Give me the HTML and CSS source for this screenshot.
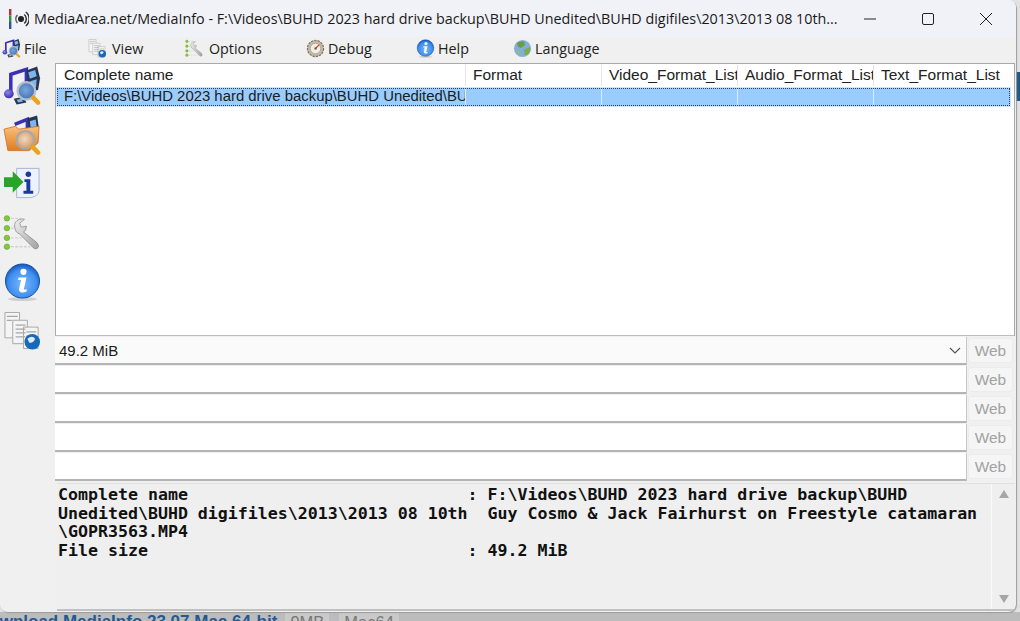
FILE: index.html
```html
<!DOCTYPE html>
<html lang="en">
<head>
<meta charset="utf-8">
<title>MediaInfo</title>
<link rel="stylesheet" href="styles.css">
</head>
<body>
<svg class="defs" width="0" height="0" aria-hidden="true">
  <defs>
    <radialGradient id="ball" cx="50%" cy="58%" r="58%"><stop offset="0" stop-color="#7ab8fa"/><stop offset=".7" stop-color="#3f8ff0"/><stop offset="1" stop-color="#1555b8"/></radialGradient>
    <radialGradient id="head" cx="40%" cy="35%" r="70%"><stop offset="0" stop-color="#8f88e8"/><stop offset="1" stop-color="#3128a8"/></radialGradient>
    <radialGradient id="glass" cx="45%" cy="45%" r="60%"><stop offset="0" stop-color="#7aa6dc"/><stop offset="1" stop-color="#3f6fb0"/></radialGradient>
    <radialGradient id="glass2" cx="45%" cy="45%" r="60%"><stop offset="0" stop-color="#f2d8bc"/><stop offset="1" stop-color="#cf9a6c"/></radialGradient>
    <linearGradient id="fold" x1="0" y1="0" x2="0" y2="1"><stop offset="0" stop-color="#fac07c"/><stop offset="1" stop-color="#e07c20"/></linearGradient>
    <linearGradient id="steel" x1="0" y1="0" x2="1" y2="1"><stop offset="0" stop-color="#f0f0f0"/><stop offset="1" stop-color="#a0a0a0"/></linearGradient>
    <symbol id="i-file" viewBox="0 0 40 40">
      <path d="M8 29 V8 L24 3 V24" fill="none" stroke="#3a30b4" stroke-width="3.6"/>
      <ellipse cx="6" cy="28" rx="5" ry="4.6" fill="url(#head)"/>
      <path d="M24 4 L35 0 L38 12 L36 24 L27 26Z" fill="#27364f"/>
      <path d="M26 6 L33 3.5 L34.5 10 L27.5 12.5Z M28 15 L34.5 13 L34 21 L29 22.5Z" fill="#7fb4ec"/>
      <path d="M11 33 L21 31 L24 37 L14 39Z" fill="#27364f"/>
      <path d="M14 34 L19 33 L20.5 36 L15.5 37Z" fill="#7fb4ec"/>
      <circle cx="24" cy="25" r="9" fill="url(#glass)" stroke="#b6c0cc" stroke-width="2.4"/>
      <path d="M31 32 L36 37" stroke="#eda21e" stroke-width="4.6" stroke-linecap="round"/>
    </symbol>
    <symbol id="i-folder" viewBox="0 0 40 40">
      <path d="M12 9 L25 4 V14" fill="none" stroke="#3a30b4" stroke-width="3.6"/>
      <path d="M25 3 L35 0 L37 14 L27 18Z" fill="#27364f"/>
      <path d="M27.5 6 L33.5 4 L34.5 11 L28.5 13Z" fill="#7fb4ec"/>
      <path d="M1 14 L13 11 L16 14 L37 11 L36 28 L27 36 L5 36Z" fill="url(#fold)" stroke="#cf6c1c" stroke-width=".8"/>
      <circle cx="23" cy="25" r="9" fill="url(#glass2)" stroke="#a8a8a8" stroke-width="2.4"/>
      <path d="M30 32 L36 38" stroke="#eda21e" stroke-width="4.6" stroke-linecap="round"/>
    </symbol>
    <symbol id="i-import" viewBox="0 0 40 40">
      <path d="M14 4 H37 V27 Q36 33 28 34 H14Z" fill="#eef2fc" stroke="#a5b4d8"/>
      <circle cx="26" cy="10" r="2.8" fill="#1a3a9c"/>
      <path d="M22 15 H28 V27 H31 V30 H21 V27 H24 V18 H22Z" fill="#1a3a9c"/>
      <path d="M1 13 H10 V7 L21 18 L10 29 V23 H1Z" fill="#28a428"/>
    </symbol>
    <symbol id="i-tools" viewBox="0 0 40 40">
      <g stroke="#d2d2d2" stroke-width="1.5" stroke-dasharray="3 1.5"><path d="M8 5 H19M8 15 H13M8 25 H19M8 34 H28"/></g>
      <g fill="#86c83c" stroke="#5c9e24" stroke-width=".6"><circle cx="4" cy="5" r="2.8"/><circle cx="4" cy="15" r="2.8"/><circle cx="4" cy="25" r="2.8"/><circle cx="4" cy="34" r="2.8"/></g>
      <path d="M12 14 Q11 8 17 6 Q20 5 22 6 L17 10 L19 14 L24 13 Q24 18 21 19 L35 30 Q38 34 35 36 Q32 37 30 34 L17 21 Q13 20 12 14Z" fill="url(#steel)" stroke="#8a8a8a" stroke-width=".8"/>
    </symbol>
    <symbol id="i-info" viewBox="0 0 40 40">
      <ellipse cx="20" cy="37.5" rx="15" ry="2" fill="#cfcfcf"/>
      <circle cx="20" cy="19" r="17.5" fill="url(#ball)" stroke="#114ea8"/>
      <circle cx="21" cy="9.5" r="3.2" fill="#fff"/>
      <path d="M16 15.5 H24 L21.5 27 Q21.5 28.5 24.5 27.5 L24 30 Q16 32.5 16.5 27 L18.5 18 H15.5Z" fill="#fff"/>
    </symbol>
    <symbol id="i-view" viewBox="0 0 40 40">
      <g fill="#f4f4f4" stroke="#a8a8a8"><path d="M2 1 H17 V27 H2Z"/><path d="M10 9 H25 V33 H10Z"/><path d="M21 16 H36 V38 H21Z"/></g>
      <g stroke="#a6a6a6" stroke-width="1.3"><path d="M4 5 H15M4 9 H9M13 14 H23M13 18 H23M13 22 H23M13 26 H23M24 21 H34M24 25 H30"/></g>
      <circle cx="30" cy="31" r="8" fill="#1668b8"/>
      <path d="M25 28 Q30 24 33 28 Q31 33 27 32Z" fill="#dfe9f4"/>
    </symbol>
    <symbol id="i-debug" viewBox="0 0 40 40">
      <circle cx="20" cy="20" r="17" fill="#c4b8a4" stroke="#7a7468" stroke-width="2.5" stroke-dasharray="5 2"/>
      <circle cx="20" cy="20" r="11" fill="#f2eee6" stroke="#8a8478"/>
      <path d="M20 20 L28 12" stroke="#d0401c" stroke-width="2.5"/>
      <circle cx="20" cy="20" r="2.5" fill="#6a6458"/>
    </symbol>
    <symbol id="i-globe" viewBox="0 0 40 40">
      <circle cx="20" cy="20" r="18" fill="#7fb0d8"/>
      <path d="M8 9 Q16 3 24 5 L25 13 L17 19 L11 17Z" fill="#6a9c48"/>
      <path d="M23 22 L35 17 Q38 26 31 33 L24 33Z" fill="#7faa50"/>
      <path d="M5 24 L13 25 L15 34 Q8 31 5 24Z" fill="#9cb878"/>
    </symbol>
  </defs>
</svg>

<div class="page-edge"></div>

<div class="window">
  <header class="titlebar">
    <svg class="app-icon" viewBox="0 0 20 20" aria-hidden="true">
      <rect x="0" y="0" width="2.4" height="6.5" fill="#b83030"/><rect x="0" y="6.5" width="2.4" height="6.5" fill="#2f8f3a"/><rect x="0" y="13" width="2.4" height="7" fill="#2f4fb0"/>
      <circle cx="12" cy="10" r="3" fill="#222"/>
      <path d="M15.3 5.5 A6 6 0 0 1 15.3 14.5 M16.8 3 A9 9 0 0 1 16.8 17" fill="none" stroke="#333" stroke-width="1.5"/>
      <path d="M8.4 6 A6 6 0 0 0 8.4 14" fill="none" stroke="#555" stroke-width="1.5"/>
    </svg>
    <span class="title">MediaArea.net/MediaInfo - F:\Videos\BUHD 2023 hard drive backup\BUHD Unedited\BUHD digifiles\2013\2013 08 10th...</span>
    <div class="caption">
      <svg class="cap-btn" viewBox="0 0 12 12" aria-hidden="true"><path d="M0 6 H12" stroke="#222" stroke-width="1"/></svg>
      <svg class="cap-btn" viewBox="0 0 12 12" aria-hidden="true"><rect x=".5" y=".5" width="11" height="11" rx="1.5" fill="none" stroke="#222"/></svg>
      <svg class="cap-btn" viewBox="0 0 12 12" aria-hidden="true"><path d="M0 0 L12 12 M12 0 L0 12" stroke="#222" stroke-width="1"/></svg>
    </div>
  </header>

  <nav class="menubar">
    <span class="menu m-file"><svg class="mi"><use href="#i-file"/></svg>File</span>
    <span class="menu m-view"><svg class="mi"><use href="#i-view"/></svg>View</span>
    <span class="menu m-options"><svg class="mi"><use href="#i-tools"/></svg>Options</span>
    <span class="menu m-debug"><svg class="mi"><use href="#i-debug"/></svg>Debug</span>
    <span class="menu m-help"><svg class="mi"><use href="#i-info"/></svg>Help</span>
    <span class="menu m-lang"><svg class="mi"><use href="#i-globe"/></svg>Language</span>
  </nav>

  <div class="body">
    <aside class="toolbar">
      <svg class="ti"><use href="#i-file"/></svg>
      <svg class="ti"><use href="#i-folder"/></svg>
      <svg class="ti"><use href="#i-import"/></svg>
      <svg class="ti"><use href="#i-tools"/></svg>
      <svg class="ti"><use href="#i-info"/></svg>
      <svg class="ti"><use href="#i-view"/></svg>
    </aside>

    <main class="content">
      <section class="list">
        <div class="cols head">
          <span class="cell c1">Complete name</span>
          <span class="cell">Format</span>
          <span class="cell">Video_Format_List</span>
          <span class="cell">Audio_Format_List</span>
          <span class="cell">Text_Format_List</span>
        </div>
        <div class="cols row">
          <span class="cell c1">F:\Videos\BUHD 2023 hard drive backup\BUHD Unedited\BUHD digifiles\2013</span>
          <span class="cell"></span>
          <span class="cell"></span>
          <span class="cell"></span>
          <span class="cell"></span>
        </div>
      </section>

      <div class="fields">
        <div class="field-row">
          <div class="field combo"><span>49.2 MiB</span>
            <svg class="chev" viewBox="0 0 12 7" aria-hidden="true"><path d="M1 1 L6 6 L11 1" fill="none" stroke="#555" stroke-width="1.2"/></svg>
          </div>
          <span class="web">Web</span>
        </div>
        <div class="field-row"><div class="field"></div><span class="web">Web</span></div>
        <div class="field-row"><div class="field"></div><span class="web">Web</span></div>
        <div class="field-row"><div class="field"></div><span class="web">Web</span></div>
        <div class="field-row"><div class="field"></div><span class="web">Web</span></div>
      </div>

      <section class="report">
        <pre class="report-text">Complete name                            : F:\Videos\BUHD 2023 hard drive backup\BUHD
Unedited\BUHD digifiles\2013\2013 08 10th  Guy Cosmo &amp; Jack Fairhurst on Freestyle catamaran
\GOPR3563.MP4
File size                                : 49.2 MiB</pre>
        <div class="scroll">
          <svg class="arrow" viewBox="0 0 10 8" aria-hidden="true"><path d="M0 8 L5 0 L10 8Z" fill="#a6a6a6"/></svg>
          <svg class="arrow" viewBox="0 0 10 8" aria-hidden="true"><path d="M0 0 L5 8 L10 0Z" fill="#a6a6a6"/></svg>
        </div>
      </section>
    </main>
  </div>
</div>

<div class="behind">
  <span class="dl">Download MediaInfo 23.07 Mac 64-bit</span>
  <span class="tag">9MB</span>
  <span class="tag t2">Mac64</span>
</div>
</body>
</html>
```
FILE: styles.css
```css
* { box-sizing: border-box; }
html, body { margin: 0; padding: 0; }
body {
  width: 1020px;
  height: 621px;
  overflow: hidden;
  background: #e2e2e2;
  font-family: "Liberation Sans", Arial, sans-serif;
  color: #1c1c1c;
  position: relative;
}
.defs { position: absolute; }

.page-edge {
  position: absolute;
  right: 0;
  top: 72px;
  width: 4px;
  height: 29px;
  background: #1f5a88;
}

.window {
  width: 1016px;
  height: 612px;
  background: #f0f0f0;
  border-radius: 0 8px 8px 8px;
  box-shadow: 1px 1px 1px #9c9c9c;
  position: relative;
  z-index: 1;
  display: flex;
  flex-direction: column;
  overflow: hidden;
}

.titlebar {
  height: 37px;
  flex: none;
  background: #f1f2f7;
  display: flex;
  align-items: center;
  padding-left: 9px;
}
.app-icon { width: 20px; height: 20px; margin-right: 5px; flex: none; }
.title {
  font-family: "Open Sans", sans-serif;
  font-size: 14.33px;
  color: #1a1a1a;
  white-space: nowrap;
  width: 812px;
  overflow: hidden;
}
.caption {
  display: flex;
  align-items: center;
  gap: 46px;
  margin-left: 18px;
}
.cap-btn { width: 12px; height: 12px; }

.menubar {
  height: 26px;
  flex: none;
  background: #f0f0f0;
  display: flex;
  align-items: center;
  font-family: "Open Sans", sans-serif;
  font-size: 14.3px;
  color: #222;
  padding: 0 0 3px 2px;
}
.menu { display: flex; align-items: center; white-space: nowrap; gap: 3px; }
.mi { width: 19px; height: 19px; flex: none; filter: blur(.3px); }
.m-file { width: 86px; }
.m-view { width: 97px; gap: 5px; }
.m-options { width: 121px; gap: 5px; }
.m-debug { width: 110px; }
.m-help { width: 97px; }

.body { flex: 1; display: flex; min-height: 0; }

.toolbar {
  width: 55px;
  flex: none;
  display: flex;
  flex-direction: column;
  align-items: flex-start;
  gap: 9px;
  padding: 3px 0 0 3px;
}
.ti { width: 39px; height: 40px; flex: none; filter: blur(.4px); }

.content {
  flex: 1;
  min-width: 0;
  display: flex;
  flex-direction: column;
}

.list {
  height: 273px;
  flex: none;
  background: #fff;
  border: 1px solid #a9a9a9;
  border-bottom-color: #bdbdbd;
  margin-right: 1px;
  padding: 1px 0 0 1px;
}
.cols {
  display: grid;
  grid-template-columns: 409px repeat(4, 136px);
  width: 953px;
}
.head { height: 21px; font-size: 15.5px; }
.head .cell { padding-left: 7px; line-height: 20px; border-right: 1px solid #e6e6e6; color: #222; }
.head .cell:last-child { border-right: 0; }
.row {
  height: 18px;
  margin-top: 2px;
  background: #99ccff;
  outline: 1px dotted #2f4258;
  outline-offset: -1px;
  box-shadow: 0 0 0 1px #cfe6fc;
  font-size: 14.9px;
}
.row .cell { line-height: 17px; padding-left: 7px; border-right: 1px solid #d8ecff; }
.row .cell:last-child { border-right: 0; }
.cell { overflow: hidden; white-space: nowrap; display: block; }

.fields { flex: none; display: flex; flex-direction: column; margin-top: 1px; }
.field-row { height: 29px; display: flex; align-items: flex-start; }
.field {
  width: 912px;
  height: 28px;
  background: #fff;
  border-right: 1px solid #c8c8c8;
  border-bottom: 2px solid #b4b4b4;
  display: flex;
  align-items: center;
  justify-content: space-between;
  padding: 0 4px;
  font-size: 15px;
}
.combo { background: #fafafa; }
.chev { width: 12px; height: 7px; margin-right: 1px; }
.web {
  width: 45px;
  height: 25px;
  margin: 1px 0 0 1px;
  background: #f5f5f5;
  border: 1px solid #ececec;
  border-radius: 3px;
  color: #a2a2a2;
  font-size: 15.4px;
  text-align: center;
  line-height: 23px;
}

.report {
  flex: 1;
  min-height: 0;
  margin: 1px 1px 1px 2px;
  background: #efefef;
  border-bottom: 2px solid #c0c0c0;
  border-top: 1px solid #e0e0e0;
  display: flex;
}
.report-text {
  flex: 1;
  margin: 0;
  padding: 2px 0 0 1px;
  font-family: "DejaVu Sans Mono", monospace;
  font-weight: bold;
  font-size: 16.6px;
  line-height: 18.7px;
  color: #111;
  white-space: pre;
  overflow: hidden;
}
.scroll {
  width: 24px;
  flex: none;
  border-left: 1px solid #fafafa;
  display: flex;
  flex-direction: column;
  justify-content: space-between;
  align-items: center;
  padding: 6px 0 6px;
}
.arrow { width: 10px; height: 8px; }

.behind {
  position: absolute;
  left: 0;
  right: 0;
  top: 612px;
  height: 9px;
  background: #bcbcbc;
  display: flex;
  align-items: flex-start;
  white-space: nowrap;
  overflow: hidden;
}
.dl {
  color: #1f5a94;
  font-weight: bold;
  font-size: 17px;
  line-height: 20px;
  margin-left: -23px;
  margin-right: 8px;
}
.tag {
  color: #777;
  font-size: 16.5px;
  line-height: 20px;
  background: #c9c9c9;
  padding: 0 5px;
}
.t2 { margin-left: 10px; }
```
